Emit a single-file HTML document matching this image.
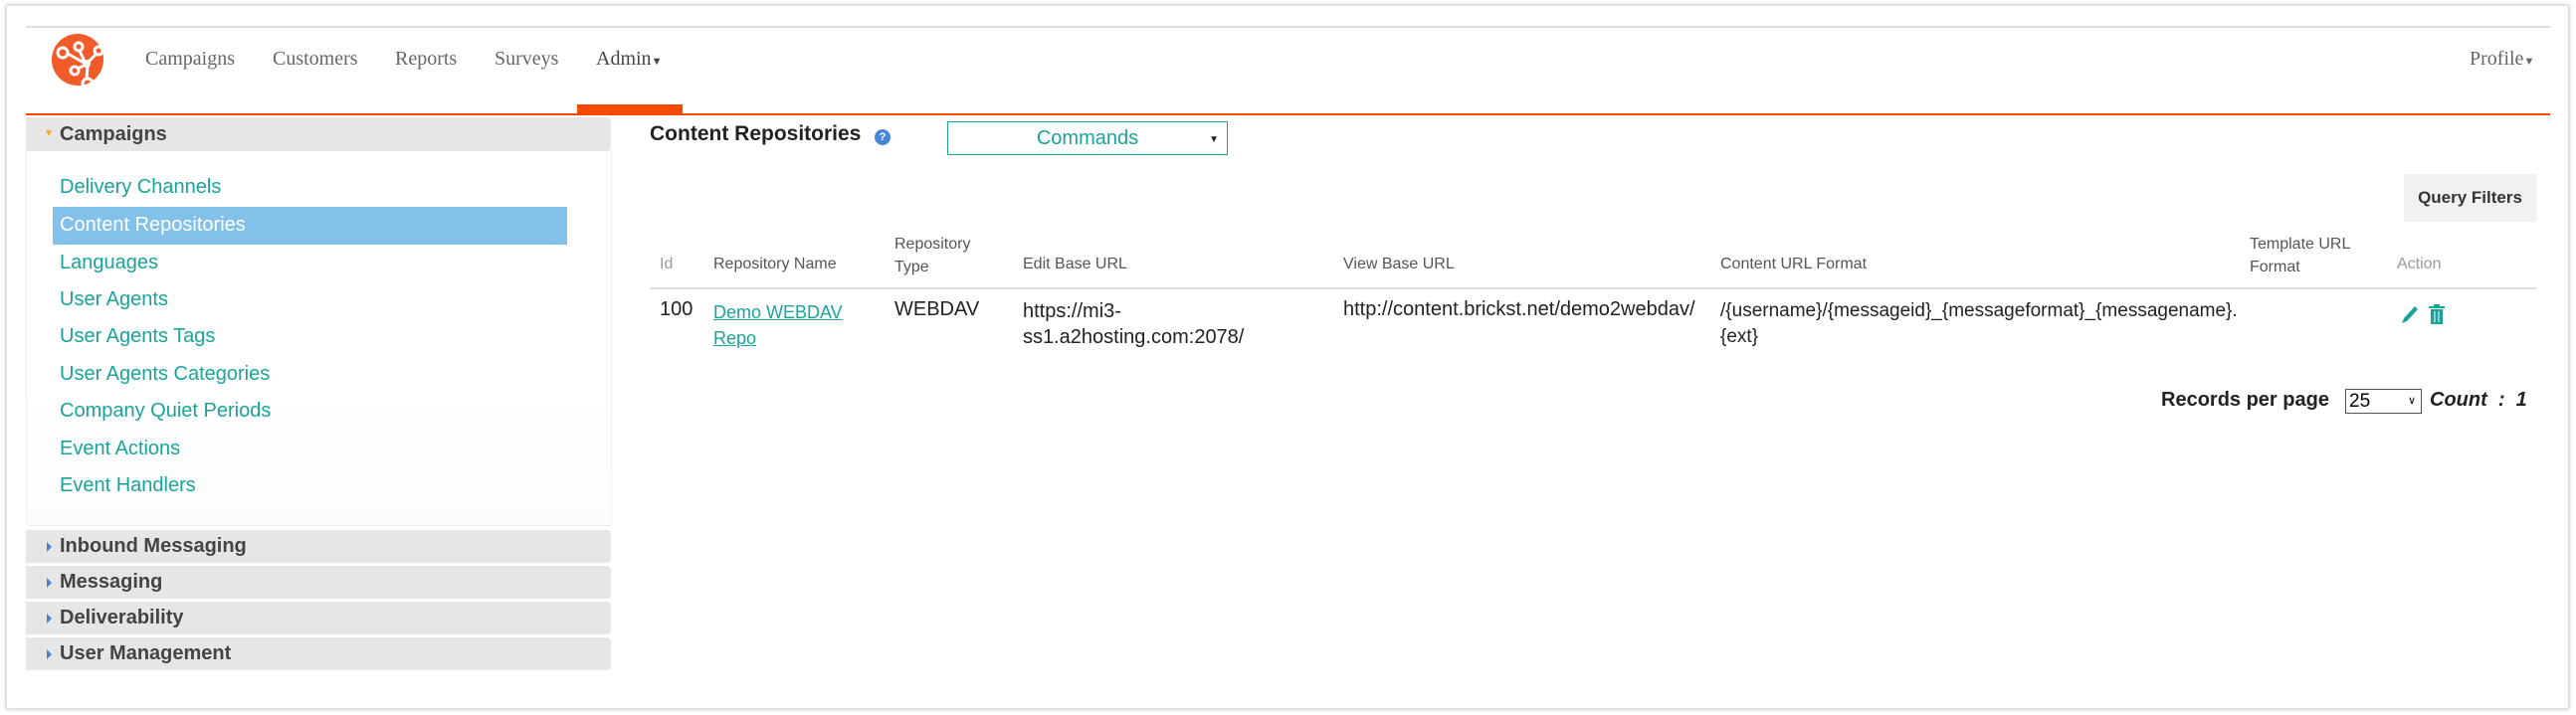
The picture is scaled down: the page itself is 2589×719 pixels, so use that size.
<!DOCTYPE html>
<html><head><meta charset="utf-8"><style>
body{margin:0;width:2589px;height:719px;background:#fff;position:relative;overflow:hidden;font-family:"Liberation Sans",sans-serif}
.a{position:absolute;white-space:nowrap}
.frame{left:6px;top:5px;width:2574px;height:706px;border:1px solid #ddd;box-shadow:0 0 4px #bbb}
.nav{font-family:"Liberation Serif",serif;font-size:20px;color:#666;top:48px}
.side{left:26px;width:588px;background:#e6e6e6;border-radius:0 4px 4px 0;font-weight:bold;font-size:20px;color:#444}
.si{left:60px;font-size:20px;color:#1aa39a}
.th{font-size:16px;color:#555}
.td{font-size:20px;color:#222}
.tri{border-left:5px solid #4a86c5;border-top:5px solid transparent;border-bottom:5px solid transparent;width:0;height:0;position:absolute;left:47px}
</style></head><body>
<div class="a frame"></div>
<div class="a" style="left:26px;top:26px;width:2537px;height:2px;background:#ddd"></div>
<svg class="a" style="left:52px;top:33px" width="52" height="54" viewBox="0 0 52 54">
<circle cx="26" cy="27" r="26" fill="#f15a29"/>
<g stroke="#fff" stroke-width="3" fill="none">
<circle cx="11" cy="20" r="5"/><circle cx="27" cy="14" r="4"/><circle cx="47" cy="18" r="4"/><circle cx="23" cy="38" r="4"/><circle cx="36" cy="51" r="5"/>
<path d="M16 21 L34 31 M28 18 L33 29 M45 21 L37 29 M26 36 L32 33 M35 46 L36 34"/></g>
<circle cx="35" cy="31" r="4" fill="#fff"/></svg>
<div class="a nav" style="left:146px">Campaigns</div>
<div class="a nav" style="left:274px">Customers</div>
<div class="a nav" style="left:397px">Reports</div>
<div class="a nav" style="left:497px">Surveys</div>
<div class="a nav" style="left:599px;color:#444">Admin<span style="font-size:11px">▼</span></div>
<div class="a nav" style="left:2482px">Profile<span style="font-size:11px">▼</span></div>
<div class="a" style="left:580px;top:105px;width:106px;height:9px;background:#f74a00"></div>
<div class="a" style="left:26px;top:114px;width:2537px;height:2px;background:#f74a00"></div>

<div class="a side" style="top:118px;height:34px;line-height:34px"><span style="position:absolute;left:18px;color:#f5a623;font-size:10px">▼</span><span style="position:absolute;left:34px">Campaigns</span></div>
<div class="a" style="left:26px;top:152px;width:587px;height:376px;border:1px solid #eee;border-top:0;border-radius:0 0 4px 4px;background:linear-gradient(#fff 60%,#fbfdfd)"></div>
<div class="a" style="left:53px;top:208px;width:517px;height:38px;background:#82c1ea"></div>
<div class="a si" style="top:177px">Delivery Channels</div>
<div class="a si" style="top:215px;color:#fff">Content Repositories</div>
<div class="a si" style="top:253px">Languages</div>
<div class="a si" style="top:290px">User Agents</div>
<div class="a si" style="top:327px">User Agents Tags</div>
<div class="a si" style="top:365px">User Agents Categories</div>
<div class="a si" style="top:402px">Company Quiet Periods</div>
<div class="a si" style="top:440px">Event Actions</div>
<div class="a si" style="top:477px">Event Handlers</div>
<div class="a side" style="top:533px;height:33px;line-height:33px"><i class="tri" style="left:21px;top:12px"></i><span style="position:absolute;left:34px">Inbound Messaging</span></div>
<div class="a side" style="top:569px;height:33px;line-height:33px"><i class="tri" style="left:21px;top:12px"></i><span style="position:absolute;left:34px">Messaging</span></div>
<div class="a side" style="top:605px;height:33px;line-height:33px"><i class="tri" style="left:21px;top:12px"></i><span style="position:absolute;left:34px">Deliverability</span></div>
<div class="a side" style="top:641px;height:33px;line-height:33px"><i class="tri" style="left:21px;top:12px"></i><span style="position:absolute;left:34px">User Management</span></div>

<div class="a" style="left:653px;top:123px;font-size:21px;font-weight:bold;color:#222">Content Repositories</div>
<div class="a" style="left:879px;top:130px;width:16px;height:16px;border-radius:50%;background:#4a86d8;color:#fff;font-size:11px;text-align:center;line-height:16px;font-weight:bold">?</div>
<div class="a" style="left:952px;top:122px;width:280px;height:32px;border:1px solid #1aa39a;color:#1aa39a;font-size:20px;line-height:32px;text-align:center">Commands<span style="position:absolute;right:8px;top:2px;color:#222;font-size:10px">▼</span></div>
<div class="a" style="left:2416px;top:175px;width:133px;height:48px;background:#f1f1f1;font-size:17px;font-weight:bold;color:#333;text-align:center;line-height:48px">Query Filters</div>

<div class="a th" style="left:663px;top:257px;color:#999">Id</div>
<div class="a th" style="left:717px;top:257px">Repository Name</div>
<div class="a th" style="left:899px;top:234px;line-height:23px">Repository<br>Type</div>
<div class="a th" style="left:1028px;top:257px">Edit Base URL</div>
<div class="a th" style="left:1350px;top:257px">View Base URL</div>
<div class="a th" style="left:1729px;top:257px">Content URL Format</div>
<div class="a th" style="left:2261px;top:234px;line-height:23px">Template URL<br>Format</div>
<div class="a th" style="left:2409px;top:257px;color:#999">Action</div>
<div class="a" style="left:653px;top:289px;width:1896px;height:2px;background:#ddd"></div>
<div class="a td" style="left:663px;top:300px">100</div>
<div class="a td" style="left:717px;top:301px;line-height:26px;font-size:18px;color:#1aa39a;text-decoration:underline">Demo WEBDAV<br>Repo</div>
<div class="a td" style="left:899px;top:300px">WEBDAV</div>
<div class="a td" style="left:1028px;top:300px;line-height:26px">https://mi3-<br>ss1.a2hosting.com:2078/</div>
<div class="a td" style="left:1350px;top:300px">http://content.brickst.net/demo2webdav/</div>
<div class="a td" style="left:1729px;top:300px;line-height:26px;font-size:19px">/{username}/{messageid}_{messageformat}_{messagename}.<br>{ext}</div>
<svg class="a" style="left:2412px;top:305px" width="50" height="22" viewBox="0 0 50 22">
<path d="M2 20 L4 15 L15 3 L18 6 L7 18 Z" fill="#1aa39a"/>
<rect x="31" y="6" width="12" height="15" fill="#1aa39a"/><rect x="29" y="3" width="16" height="2" fill="#1aa39a"/><rect x="34" y="1" width="6" height="2" fill="#1aa39a"/>
<path d="M35 8 V19 M39 8 V19" stroke="#fff" stroke-width="1"/></svg>

<div class="a" style="left:2172px;top:391px;font-size:20px;font-weight:bold;color:#222">Records per page</div>
<div class="a" style="left:2357px;top:391px;border:1px solid #555;font-size:19px;line-height:23px;padding-left:3px;box-sizing:border-box;width:77px;height:25px">25<span style="position:absolute;right:5px;font-size:11px">∨</span></div>
<div class="a" style="left:2442px;top:391px;font-size:20px;font-weight:bold;font-style:italic;color:#222">Count&nbsp; :&nbsp; 1</div>
</body></html>
